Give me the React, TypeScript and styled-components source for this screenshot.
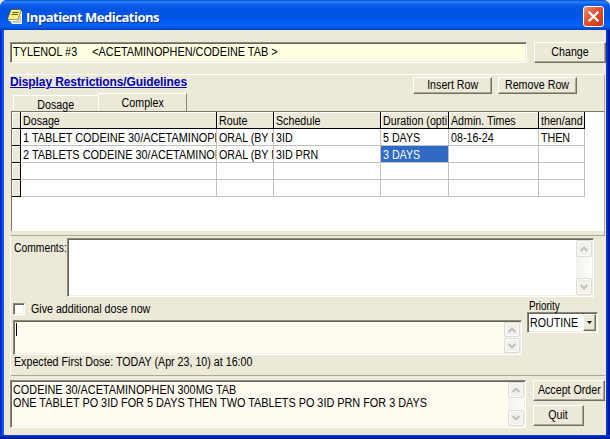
import React from "react";
import styled, { createGlobalStyle, css } from "styled-components";

const Global = createGlobalStyle`
  * { box-sizing: border-box; }
  body { margin: 0; background: #ece9d8; overflow: hidden; }
`;

const face = "#ece9d8";
const sunken = css`
  border: 1px solid;
  border-color: #8a877b #fff #fff #8a877b;
  box-shadow: inset 1px 1px 0 #69665c, inset -1px -1px 0 #f1efe2;
`;

const Window = styled.div`
  width: 610px;
  height: 439px;
  display: flex;
  flex-direction: column;
  background:
    linear-gradient(#0a44d8, #0024b4 2px, #00138c) 0 100% / 100% 4px no-repeat,
    linear-gradient(90deg, #0019cf 0, #0b4be0 2px, #1660e8 4px, #0440dc 606px, #0022b8 608px, #00138c 610px);
  border-radius: 7px 7px 0 0;
  font: 12px/13px "Liberation Sans", Arial, sans-serif;
  color: #000;
`;

const TitleBar = styled.header`
  height: 30px;
  flex: none;
  display: flex;
  align-items: center;
  padding: 3px 6px 0 7px;
  border-radius: 7px 7px 0 0;
  background: linear-gradient(#0a4cc8 0, #2b82fb 2px, #1163ee 4px, #0355e2 8px, #0054e3 16px, #005cf5 22px, #0062fc 26px, #0050d8 28px, #0040c0 30px);
`;

const Title = styled.h1`
  flex: 1;
  margin: 0 0 0 4px;
  font: bold 13px/18px "Open Sans", sans-serif;
  letter-spacing: -0.48px;
  color: #fff;
  text-shadow: 1px 1px 0 #0a2f95;
`;

const Client = styled.main`
  width: 602px;
  height: 405px;
  margin: 0 0 4px 4px;
  padding-top: 12px;
  background: ${face};
`;

const Txt = styled.span<{ $k?: number; $center?: boolean }>`
  display: block;
  white-space: pre;
  transform: scaleX(${(p) => p.$k ?? 0.89});
  transform-origin: ${(p) => (p.$center ? "center" : "left")};
`;

const DrugRow = styled.div`
  display: flex;
  gap: 7px;
  height: 21px;
  margin-left: 6px;
`;

const DrugField = styled.div`
  ${sunken}
  width: 517px;
  flex: none;
  padding: 3px 0 0 2px;
  background: #ffffe1;
`;

const Button = styled.button<{ $w: number; $h: number }>`
  width: ${(p) => p.$w}px;
  height: ${(p) => p.$h}px;
  flex: none;
  padding: 0;
  display: flex;
  align-items: center;
  justify-content: center;
  font: inherit;
  color: inherit;
  background: ${face};
  border: 1px solid;
  border-color: #fff #716f64 #716f64 #fff;
  border-radius: 0;
  box-shadow: inset -1px -1px 0 #aca899;
`;

const Complex = styled.section`
  height: 161px;
  margin: 11px 1px 0 6px;
  border-top: 1px solid #fff;
  border-right: 1px solid #aca899;
`;

const Toolbar = styled.div`
  display: flex;
  height: 20px;
  padding-top: 2px;
  gap: 6px;
`;

const Guidelines = styled.a`
  width: 397px;
  margin-top: -2px;
  font: bold 12px/14px "Liberation Sans", Arial, sans-serif;
  letter-spacing: -0.1px;
  color: #0000b0;
  text-decoration: underline;
`;

const Tabs = styled.div`
  display: flex;
  align-items: flex-end;
  height: 16px;
  padding-left: 3px;
`;

const Tab = styled.div<{ $active?: boolean }>`
  width: ${(p) => (p.$active ? 89 : 85)}px;
  height: ${(p) => (p.$active ? 18 : 16)}px;
  display: flex;
  justify-content: center;
  padding-top: 3px;
  border-top: 1px solid #fff;
  border-left: 1px solid #fff;
  border-right: ${(p) => (p.$active ? "1px solid #8a877b" : "0")};
`;

const Grid = styled.div`
  height: 120px;
  margin-left: 1px;
  border-top: 1px solid #77746a;
  border-left: 1px solid #77746a;
  background: #fff;
`;

const GridRow = styled.div`
  display: grid;
  width: 573px;
  height: 17px;
  grid-template-columns: 9px 196px 57px 107px 68px 90px 46px;
`;

const Cell = styled.div<{ $head?: boolean; $selected?: boolean }>`
  overflow: hidden;
  padding: 3px 0 0 2px;
  border-right: 1px solid ${(p) => (p.$head ? "#000" : "#c0c0c0")};
  border-bottom: 1px solid ${(p) => (p.$head ? "#000" : "#c0c0c0")};
  background: ${(p) => (p.$head ? face : p.$selected ? "#316ac5" : "#fff")};
  color: ${(p) => (p.$selected ? "#fff" : "#000")};
  box-shadow: ${(p) => (p.$head ? "inset 1px 1px 0 #fff" : "none")};
`;

const Details = styled.section`
  height: 141px;
  margin: 0 1px 0 6px;
  border-top: 1px solid #aca899;
  border-bottom: 1px solid #aca899;
  border-left: 1px solid #fff;
`;

const CommentsRow = styled.div`
  display: flex;
  padding: 2px 0 0 3px;
  height: 61px;
`;

const CommentsLabel = styled.div`
  width: 53px;
  padding-top: 4px;
`;

const Memo = styled.div<{ $w: number; $h: number; $tint?: boolean }>`
  ${sunken}
  width: ${(p) => p.$w}px;
  height: ${(p) => p.$h}px;
  flex: none;
  display: flex;
  justify-content: space-between;
  padding: 1px;
  background: ${(p) => (p.$tint ? "#fffbf0" : "#fff")};
`;

const MemoText = styled.div`
  width: 460px;
  padding: 2px 0 0 1px;
`;

const Caret = styled.div`
  width: 1px;
  height: 13px;
  margin: 1px 0 0 1px;
  background: #000;
`;

const Track = styled.div`
  width: 16px;
  flex: none;
  display: flex;
  flex-direction: column;
  justify-content: space-between;
  background: linear-gradient(90deg, #f3f1ec, #fefefb);
`;

const Arrow = styled.div<{ $h: number }>`
  height: ${(p) => p.$h}px;
  display: flex;
  align-items: center;
  justify-content: center;
  background: #f1f0ea;
  border: 1px solid #dddcd3;
  border-radius: 2px;
  box-shadow: inset 0 0 0 1px #fbfaf7;
`;

const OrderRow = styled.div`
  display: flex;
  padding-left: 2px;
`;

const DoseColumn = styled.div`
  width: 514px;
`;

const CheckRow = styled.label`
  display: flex;
  height: 23px;
  padding-top: 6px;
  gap: 6px;
`;

const Check = styled.div`
  ${sunken}
  width: 12px;
  height: 12px;
  background: #fff;
`;

const Expected = styled.div`
  padding: 1px 0 0 1px;
`;

const PriorityColumn = styled.div`
  padding-top: 3px;
`;

const PriorityLabel = styled.div`
  padding-left: 2px;
  height: 12px;
`;

const Combo = styled.div`
  ${sunken}
  width: 71px;
  height: 21px;
  display: flex;
  justify-content: space-between;
  padding: 1px;
  background: #fff;
`;

const ComboText = styled.div`
  width: 52px;
  padding: 3px 0 0 1px;
`;

const Footer = styled.footer`
  display: flex;
  margin: 4px 0 0 6px;
  gap: 7px;
`;

const FooterButtons = styled.div`
  display: flex;
  flex-direction: column;
  gap: 4px;
`;

const Scroll = ({ h }: { h: number }) => (
  <Track>
    <Arrow $h={h}>
      <svg width="8" height="6" viewBox="0 0 8 6">
        <path d="M0.7 5 4 1.7 7.3 5" fill="none" stroke="#bfbeb5" strokeWidth="1.9" />
      </svg>
    </Arrow>
    <Arrow $h={h}>
      <svg width="8" height="6" viewBox="0 0 8 6">
        <path d="M0.7 1 4 4.3 7.3 1" fill="none" stroke="#bfbeb5" strokeWidth="1.9" />
      </svg>
    </Arrow>
  </Track>
);

const NoteIcon = () => (
  <svg width="15" height="16" viewBox="0 0 15 16">
    <path d="M4 2h11v13H5l-2-3z" fill="#f6f4e4" />
    <path d="M4 .5h10.5L11 10.5H.3z" fill="#f6f27a" stroke="#3c3a10" strokeWidth=".6" />
    <path d="M5.5 3.5h6M4.8 5.5h6" stroke="#5c5a1c" strokeWidth="1" />
    <path d="M.5 10.5h10.8v1.8H2.5z" fill="#fff" stroke="#6a6850" strokeWidth=".4" />
    <path d="M6 13.2h7.5M13.3 7v6" fill="none" stroke="#a9a68c" strokeWidth=".8" />
  </svg>
);

const CloseIcon = () => (
  <svg width="21" height="21" viewBox="0 0 21 21">
    <defs>
      <linearGradient id="close" x1="0" y1="0" x2="1" y2="1">
        <stop offset="0" stopColor="#ee9778" />
        <stop offset=".45" stopColor="#df5130" />
        <stop offset="1" stopColor="#c13a12" />
      </linearGradient>
    </defs>
    <rect x=".5" y=".5" width="20" height="20" rx="2.5" fill="url(#close)" stroke="#fff" />
    <path d="M5.7 5.7l9.6 9.6M15.3 5.7l-9.6 9.6" stroke="#fff" strokeWidth="2.2" />
  </svg>
);

const headers = ["", "Dosage", "Route", "Schedule", "Duration (opti", "Admin. Times", "then/and"];

const rows = [
  ["1 TABLET CODEINE 30/ACETAMINOPH", "ORAL (BY M", "3ID", "5 DAYS", "08-16-24", "THEN"],
  ["2 TABLETS CODEINE 30/ACETAMINOP", "ORAL (BY M", "3ID PRN", "3 DAYS", "", ""],
  ["", "", "", "", "", ""],
  ["", "", "", "", "", ""],
];

export default function App() {
  return (
    <>
      <Global />
      <Window>
        <TitleBar>
          <NoteIcon />
          <Title>Inpatient Medications</Title>
          <CloseIcon />
        </TitleBar>
        <Client>
          <DrugRow>
            <DrugField>
              <Txt $k={0.905}>{"TYLENOL #3     <ACETAMINOPHEN/CODEINE TAB >"}</Txt>
            </DrugField>
            <Button $w={72} $h={21}><Txt $center>Change</Txt></Button>
          </DrugRow>
          <Complex>
            <Toolbar>
              <Guidelines>Display Restrictions/Guidelines</Guidelines>
              <Button $w={79} $h={17}><Txt $center>Insert Row</Txt></Button>
              <Button $w={79} $h={17}><Txt $center>Remove Row</Txt></Button>
            </Toolbar>
            <Tabs>
              <Tab><Txt $center>Dosage</Txt></Tab>
              <Tab $active><Txt $center>Complex</Txt></Tab>
            </Tabs>
            <Grid>
              <GridRow>
                {headers.map((t, i) => (
                  <Cell key={i} $head><Txt>{t}</Txt></Cell>
                ))}
              </GridRow>
              {rows.map((r, y) => (
                <GridRow key={y}>
                  <Cell $head />
                  {r.map((t, x) => (
                    <Cell key={x} $selected={y === 1 && x === 3}>
                      <Txt $k={x === 0 ? 0.91 : 0.89}>{t}</Txt>
                    </Cell>
                  ))}
                </GridRow>
              ))}
            </Grid>
          </Complex>
          <Details>
            <CommentsRow>
              <CommentsLabel><Txt $k={0.86}>Comments:</Txt></CommentsLabel>
              <Memo $w={527} $h={59}><span /><Scroll h={17} /></Memo>
            </CommentsRow>
            <OrderRow>
              <DoseColumn>
                <CheckRow><Check /><Txt>Give additional dose now</Txt></CheckRow>
                <Memo $w={509} $h={35} $tint><Caret /><Scroll h={15} /></Memo>
                <Expected><Txt>Expected First Dose: TODAY (Apr 23, 10) at 16:00</Txt></Expected>
              </DoseColumn>
              <PriorityColumn>
                <PriorityLabel><Txt $k={0.82}>Priority</Txt></PriorityLabel>
                <Combo>
                  <ComboText><Txt>ROUTINE</Txt></ComboText>
                  <Button $w={13} $h={17}>
                    <svg width="5" height="3"><path d="M0 0h5L2.5 3z" /></svg>
                  </Button>
                </Combo>
              </PriorityColumn>
            </OrderRow>
          </Details>
          <Footer>
            <Memo $w={516} $h={48} $tint>
              <MemoText>
                <Txt $k={0.905}>CODEINE 30/ACETAMINOPHEN 300MG TAB</Txt>
                <Txt $k={0.905}>ONE TABLET PO 3ID FOR 5 DAYS THEN TWO TABLETS PO 3ID PRN FOR 3 DAYS</Txt>
              </MemoText>
              <Scroll h={16} />
            </Memo>
            <FooterButtons>
              <Button $w={72} $h={21}><Txt $center>Accept Order</Txt></Button>
              <Button $w={51} $h={21}><Txt $center>Quit</Txt></Button>
            </FooterButtons>
          </Footer>
        </Client>
      </Window>
    </>
  );
}
